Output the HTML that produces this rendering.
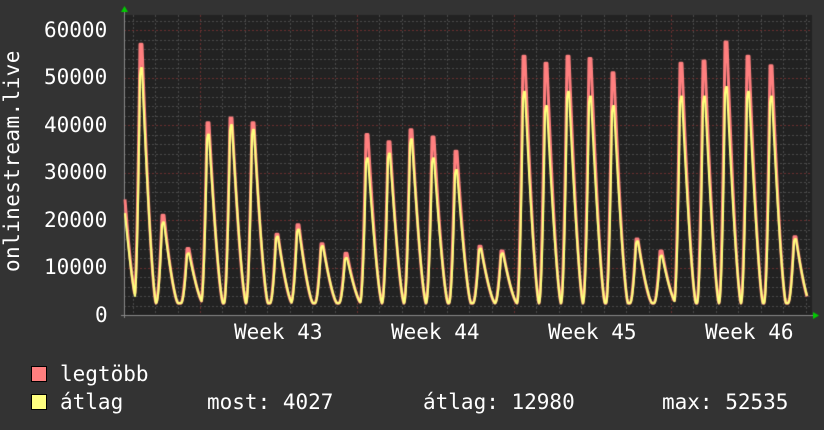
<!DOCTYPE html>
<html><head><meta charset="utf-8"><style>
html,body{margin:0;padding:0;background:#333;}
body{width:824px;height:430px;position:relative;overflow:hidden;font-family:"DejaVu Sans Mono","Liberation Mono",monospace;color:#fff;}
canvas{position:absolute;left:0;top:0;}
.t{position:absolute;font-size:21px;line-height:21px;white-space:pre;color:#fff;}
.sq{position:absolute;width:14px;height:14px;border:1px solid #000;}
</style></head><body>
<canvas id="c" width="824" height="430"></canvas>
<div class="t" style="left:44px;top:20px">60000</div>
<div class="t" style="left:44px;top:67px">50000</div>
<div class="t" style="left:44px;top:115px">40000</div>
<div class="t" style="left:44px;top:162px">30000</div>
<div class="t" style="left:44px;top:210px">20000</div>
<div class="t" style="left:44px;top:257px">10000</div>
<div class="t" style="left:95px;top:305px">0</div>
<div class="t" style="left:2px;top:272px;transform-origin:0 0;transform:rotate(-90deg);letter-spacing:0.4px">onlinestream.live</div>
<div class="t" style="left:234px;top:322px">Week 43</div>
<div class="t" style="left:391px;top:322px">Week 44</div>
<div class="t" style="left:548px;top:322px">Week 45</div>
<div class="t" style="left:705px;top:322px">Week 46</div>
<div class="sq" style="left:31px;top:366px;background:#ff7f7f"></div>
<div class="sq" style="left:31px;top:394px;background:#ffff7f"></div>
<div class="t" style="left:60px;top:364px">legtöbb</div>
<div class="t" style="left:60px;top:392px">átlag</div>
<div class="t" style="left:207px;top:392px">most: 4027</div>
<div class="t" style="left:423px;top:392px">átlag: 12980</div>
<div class="t" style="left:662px;top:392px">max: 52535</div>
<script>
var c=document.getElementById('c').getContext('2d');
var L=124,R=812,T=15,B=315;
function Y(v){return B-v*0.00475;}
c.fillStyle='#222';c.fillRect(L,T,R-L,B-T);
c.lineWidth=1;
c.setLineDash([2,2]);
for(var v=2000;v<=62000;v+=2000){var y=Math.round(Y(v))+0.5;if(y<T)break;c.strokeStyle=(v%10000==0)?'#6a3030':'#4a4a4a';c.beginPath();c.moveTo(L,y);c.lineTo(R,y);c.stroke();}
for(var i=-4;i<30;i++){var x=200+i*22.43;if(x<=L||x>=R)continue;x=Math.round(x)+0.5;c.strokeStyle=(i%7==0)?'#6a3030':'#4a4a4a';c.beginPath();c.moveTo(x,T);c.lineTo(x,B);c.stroke();}
c.setLineDash([]);
c.strokeStyle='#888';c.beginPath();c.moveTo(L+0.5,T-3);c.lineTo(L+0.5,B+3);c.moveTo(L-3,B+0.5);c.lineTo(R+3,B+0.5);c.stroke();
c.fillStyle='#0c0';
c.beginPath();c.moveTo(L-3,12);c.lineTo(L+4,12);c.lineTo(L+0.5,6);c.fill();
c.beginPath();c.moveTo(R+1,B-3);c.lineTo(R+1,B+4);c.lineTo(R+7,B+0.5);c.fill();
var pk=[[122,30000,26000],[141,57000,52000],[163,21000,19500],[188,14000,13000],[208,40500,38000],[231,41500,40000],[253,40500,39000],[277,17000,16500],[298,19000,18000],[322,15000,14500],[346,13000,12000],[367,38000,33000],[389,36500,34000],[411,39000,37000],[433,37500,33000],[456,34500,30500],[480,14500,14000],[502,13500,13000],[524,54500,47000],[546,53000,44000],[568,54500,47000],[590,54000,46000],[613,51000,44000],[637,16000,15500],[661,13500,12500],[681,53000,46000],[704,53500,46000],[726,57500,48000],[748,54500,47000],[771,52500,46000],[795,16500,16000]];
function f(d,k){
 if(d<-7||d>15)return 0;
 if(d<-1){var t=(d+7)/6;return k==1?Math.pow(t,1.8):Math.pow(t,2.0)*0.97;}
 if(d<=1)return k==1?1:(d<0?0.97+0.03*(d+1):1);
 var t=1-(d-1)/14;return Math.pow(t,k==1?1.5:1.4);
}
function val(x,k){var base=2500,m=base;for(var i=0;i<pk.length;i++){var d=x-pk[i][0];var p=pk[i][k]-base;var v=base+p*f(d,k);if(v>m)m=v;}return m;}
function line(k,col,w){c.strokeStyle=col;c.lineWidth=w;c.lineJoin='round';c.beginPath();for(var x=125;x<=807;x+=0.5){var y=Y(val(x,k));if(x==125)c.moveTo(x,y);else c.lineTo(x,y);}c.stroke();}
line(1,'#ff7f7f',3);
line(2,'#ffff7f',2.2);
</script>
</body></html>
